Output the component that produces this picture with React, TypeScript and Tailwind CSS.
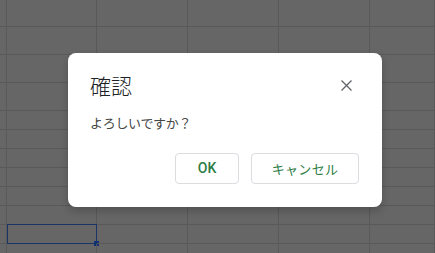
const colWidths = ["w-[7px]", "w-[90px]", "w-[91px]", "w-[91px]", "w-[91px]", "flex-1"];
const rowHeights = [
  "h-[27px]", "h-[28px]", "h-[28px]", "h-[28px]",
  "h-[19px]", "h-[19px]", "h-[19px]", "h-[19px]", "h-[19px]", "h-[19px]", "h-[19px]", "h-[19px]",
];

function Sheet() {
  return (
    <div className="flex flex-col">
      {rowHeights.map((h, r) => (
        <div key={r} className={`flex ${h} shrink-0`}>
          {colWidths.map((w, c) => (
            <div
              key={c}
              className={`${w} shrink-0 box-border border-b border-r border-[#595959] relative`}
            >
              {r === 10 && c === 1 && (
                <div className="absolute left-0 -top-px -right-px -bottom-px border border-[#1b3566]">
                  <div className="absolute -right-[3px] -bottom-[3px] w-[5px] h-[5px] bg-[#0f3174]" />
                </div>
              )}
            </div>
          ))}
        </div>
      ))}
    </div>
  );
}

export default function App() {
  return (
    <div className="relative w-[435px] h-[253px] overflow-hidden bg-[#666666] font-['Noto_Sans_CJK_JP',sans-serif]">
      <Sheet />
      <div className="absolute left-[68px] top-[53px] w-[314px] h-[154px] bg-white rounded-[8px] shadow-[0_4px_8px_rgba(0,0,0,0.2)] flex flex-col px-[22px]">
        <div className="flex items-center justify-between h-[33px] mt-[16px]">
          <h2 className="text-[21px] leading-none font-light text-[#202124]">確認</h2>
          <button className="w-[24px] h-[24px] flex items-center justify-center mr-[2px]">
            <svg width="11" height="11" viewBox="0 0 11 11">
              <path d="M0.5 0.5L10.5 10.5M10.5 0.5L0.5 10.5" stroke="#5f6368" strokeWidth="1.3" />
            </svg>
          </button>
        </div>
        <p className="mt-[12px] text-[13px] leading-[18px] text-[#444746] tracking-[-0.3px]">よろしいですか？</p>
        <div className="flex justify-end gap-[12px] mt-[21px] mr-[1px]">
          <button className="w-[64px] h-[31px] rounded-[4px] border border-[#dadce0] text-[14px] font-medium text-[#2e7d46] font-['Roboto',sans-serif]">
            OK
          </button>
          <button className="w-[108px] h-[31px] rounded-[4px] border border-[#dadce0] text-[13px] text-[#2e7d46] tracking-[0.3px]">
            キャンセル
          </button>
        </div>
      </div>
    </div>
  );
}
